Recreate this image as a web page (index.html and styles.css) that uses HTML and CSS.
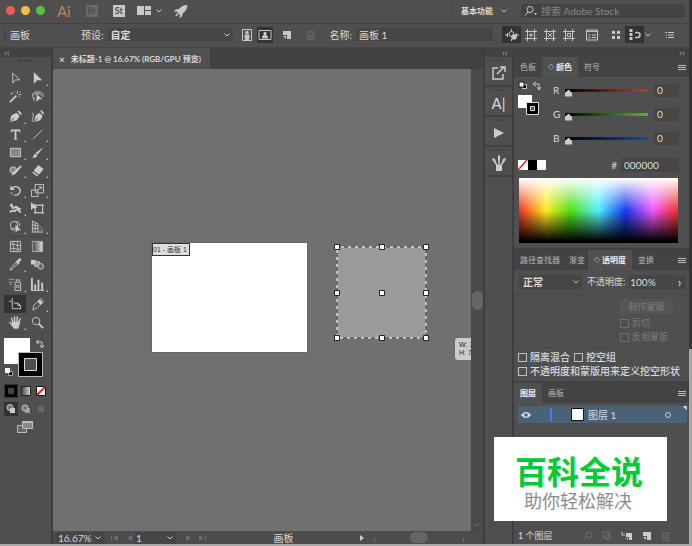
FILE: index.html
```
<!DOCTYPE html>
<html lang="zh-CN">
<head>
<meta charset="UTF-8">
<meta name="viewport" content="width=device-width, initial-scale=1.0">
<title>未标题-1</title>
<link rel="stylesheet" href="styles.css">
</head>
<body>
  <div class="app">
    <header class="title-bar">
      <div class="lights"><i class="red"></i><i class="yellow"></i><i class="green"></i></div>
      <span class="logo">Ai</span>
      <button class="badge dim">Br</button>
      <button class="badge">St</button>
      <button class="arrange" aria-label="排列文档">
        <svg width="14" height="12" viewBox="0 0 14 12" fill="#c8c8c8"><path d="M0 1h7v9H0zM8 1h6v4H8zM8 6h6v4H8z"/></svg>
        <svg width="6" height="6" viewBox="0 0 6 6" class="line"><path d="M0.500 1.500L3 4l2.500-2.500"/></svg>
      </button>
      <button aria-label="GPU 性能">
        <svg width="14" height="14" viewBox="0 0 14 14" fill="#c8c8c8"><path d="M13.500 1C9 1 6.500 3 5 5L1.500 5.500 0 8l3-.500L4 9.500l2 1L5.500 14 8 12.500 9 9c2.500-1.500 4-4 4.500-8zM3 9L1 12.500 4.500 11z"/></svg>
      </button>
      <button class="workspace">基本功能
        <svg width="6" height="6" viewBox="0 0 6 6" class="line"><path d="M0.500 1.500L3 4l2.500-2.500"/></svg>
      </button>
      <label class="search">
        <svg width="14" height="12" viewBox="0 0 14 12" class="line"><circle cx="6" cy="4.500" r="3"/><path d="M4 7L1 10.500"/><path d="M10 8h3l-1.500 2z" fill="#c8c8c8" stroke="none"/></svg>
        <input type="text" placeholder="搜索 Adobe Stock" aria-label="搜索 Adobe Stock">
      </label>
    </header>

    <div class="control-bar">
      <span class="mode">画板</span>
      <label for="preset">预设:</label>
      <select id="preset" class="preset"><option>自定</option></select>
      <div class="orient">
        <button aria-label="纵向"><svg width="12" height="14" viewBox="0 0 12 14"><path d="M1.500 1.500h9v11h-9z" fill="none" stroke="#c8c8c8"/><circle cx="6" cy="4.500" r="1.800" fill="#c8c8c8"/><path d="M3.500 6.500h5V10H8v2H4v-2h-.5z" fill="#c8c8c8"/></svg></button>
        <button class="on" aria-label="横向"><svg width="14" height="12" viewBox="0 0 14 12"><path d="M1 1.500h12v9H1z" fill="none" stroke="#c8c8c8"/><circle cx="7" cy="4.500" r="1.700" fill="#c8c8c8"/><path d="M4 9.500V7.500L5.500 6h3L10 7.500v2z" fill="#c8c8c8"/></svg></button>
      </div>
      <button aria-label="新建画板"><svg width="10" height="10" viewBox="0 0 10 10" fill="#c8c8c8"><path d="M1 1h8v8H5V5H1z"/><path d="M1 6l3 3V6z"/></svg></button>
      <button class="trash" aria-label="删除画板"><svg width="10" height="10" viewBox="0 0 10 10" fill="none" stroke="#6d6d6d"><path d="M1 2h8M3.500 1h3M2 3v6.500h6V3M4 4v4M6 4v4"/></svg></button>
      <label for="boardName">名称:</label>
      <input type="text" id="boardName" class="board-name" value="画板 1">
      <div class="bar-icons">
        <button class="on" aria-label="随画板移动"><svg width="14" height="14" viewBox="0 0 14 14" class="line"><circle cx="6.500" cy="6" r="2.500"/><path d="M6.500 1v2M0 7h2M2.500 5v4M6.500 11v2M11.500 5v4M12 7h2"/><path d="M7 7h4v4H7z" fill="#c8c8c8"/></svg></button>
        <button aria-label="显示中心标记"><svg width="12" height="12" viewBox="0 0 12 12" class="line"><path d="M2.500 0v12M9.500 0v12M0 2.500h12M0 9.500h12M6 4v4M4 6h4"/></svg></button>
        <button aria-label="显示十字线"><svg width="12" height="12" viewBox="0 0 12 12" class="line"><path d="M2.500 0v12M9.500 0v12M0 2.500h12M0 9.500h12M4 4l4 4M8 4L4 8"/></svg></button>
        <button aria-label="显示安全区域"><svg width="12" height="12" viewBox="0 0 12 12" class="line"><path d="M2.500 0v12M9.500 0v12M0 2.500h12M0 9.500h12M4.500 4.500h3v3h-3z"/></svg></button>
        <button class="options" aria-label="画板选项"><svg width="14" height="12" viewBox="0 0 14 12" class="line"><path d="M1.500 1h11v10h-11zM1.500 2.500h11M3.500 6h2M7 6h4M3.500 8.500h2M7 8.500h4"/></svg></button>
        <button class="grid-btn" aria-label="重新排列"><svg width="10" height="10" viewBox="0 0 10 10" fill="#c8c8c8"><path d="M1 1h3v3H1zM6 1h3v3H6zM1 6h3v3H1zM6 6h3v3H6z"/></svg></button>
        <button class="on" aria-label="对齐"><svg width="14" height="12" viewBox="0 0 14 12" class="line"><path d="M3 0v11" stroke-width="3" stroke-dasharray="3 1"/><path d="M7 3.500h2.500a2.300 2.300 0 0 1 0 5H7" stroke-width="1.600"/></svg></button>
        <button class="narrow" aria-label="对齐菜单"><svg width="6" height="6" viewBox="0 0 6 6" class="line"><path d="M0.500 1.500L3 4l2.500-2.500"/></svg></button>
        <button class="last" aria-label="控制菜单"><svg width="10" height="8" viewBox="0 0 10 8" class="line"><path d="M0 1.500h2M3 1.500h6M1 4h1M3 4h6M1 6.500h1M3 6.500h6"/></svg></button>
      </div>
    </div>

    <main class="main">
      <aside class="tools">
        <div class="strip">‹‹</div>
        <div class="grip"></div>
        <div class="tool-group">
          <button aria-label="选择"><svg viewBox="0 0 14 14" class="line"><path d="M4 1v11l3-3.500h4.500z"/></svg></button>
          <button class="more" aria-label="直接选择"><svg viewBox="0 0 14 14" fill="#ccc"><path d="M3 0v13l3.500-4H12z"/></svg></button>
          <button aria-label="魔棒"><svg viewBox="0 0 14 14" class="line"><path d="M1 13l7-7" stroke-width="2"/><path d="M9 1v3M13 5h-3M12.500 1.500L11 3M5 2l1 1M12 8l-1-1M2 4h2M3 3v2"/></svg></button>
          <button aria-label="套索"><svg viewBox="0 0 14 14" class="line"><path d="M4 9C0 9 0 2 7 2s7 4 5 6M3 6c0-3 8-3 8 0M4 8c-2 1 0 3-1 4"/><path d="M6 4v9l2.500-3H12z" fill="#ccc" stroke="none"/></svg></button>
        </div>
        <div class="tool-group">
          <button class="more" aria-label="钢笔"><svg viewBox="0 0 14 14" fill="#ccc"><path d="M1 13L2.500 6 8 3l3.500 3.500L8.500 11z"/><path d="M9 1.500l1.500-1L14 4l-1.500 1.500z"/><path d="M1.500 12.500l4-4" stroke="#4f4f4f"/></svg></button>
          <button aria-label="曲率"><svg viewBox="0 0 14 14"><path d="M3 13L5 6l4-3 3.500 3.500L10 11zM10 1l1-1 3 3-1 2z" fill="#ccc"/><path d="M3.500 12.500L7 9" stroke="#4f4f4f"/><path d="M1 3c2 1 2 3 1 5s-1 4 0 5" class="line"/></svg></button>
          <button class="more" aria-label="文字"><svg viewBox="0 0 14 14" fill="none" stroke="#ccc" stroke-width="2"><path d="M2 2.500h10M7 2v10"/><path d="M2.500 2v3M11.500 2v3M5 12h4" stroke-width="1"/></svg></button>
          <button class="more" aria-label="直线段"><svg viewBox="0 0 14 14" class="line"><path d="M2 12L12 2"/></svg></button>
          <button class="more" aria-label="矩形"><svg viewBox="0 0 14 14"><path d="M1.500 2.500h11v9h-11z" fill="#888" stroke="#ccc"/></svg></button>
          <button class="more" aria-label="画笔"><svg viewBox="0 0 14 14" fill="#ccc"><path d="M13.500 1L7 9.500 5 7.500zM4.500 8l2.300 2.300C6 13 3 13 1 12.500c2-.5 1.500-3.500 3.500-4.500z"/></svg></button>
          <button class="more" aria-label="斑点画笔"><svg viewBox="0 0 14 14"><circle cx="4.500" cy="6.500" r="3.500" fill="#888" stroke="#ccc"/><path d="M14 2.500L6.500 11l-4 1.500L4 9.500 12 2z" fill="#ccc"/></svg></button>
          <button class="more" aria-label="橡皮擦"><svg viewBox="0 0 14 14" fill="#ccc"><path d="M8 1l5.500 4.500-5 6L3 7z"/><path d="M2.500 8L7.500 12l-1 1.500-5-4z"/></svg></button>
        </div>
        <div class="tool-group">
          <button class="more" aria-label="旋转"><svg viewBox="0 0 14 14" fill="none" stroke="#ccc" stroke-width="1.500"><path d="M3 5c3-4 9-2 9 2.500 0 3-3 5-6 4.500"/><path d="M1.500 1.500v5h5z" fill="#ccc" stroke="none"/><path d="M2 9l3 3" stroke-dasharray="1 1"/></svg></button>
          <button class="more" aria-label="比例缩放"><svg viewBox="0 0 14 14" class="line"><path d="M.5 6.500h7v7h-7zM4.500.5h9v9h-9zM6 8l5-5M8 3h3v3"/></svg></button>
          <button class="more" aria-label="宽度"><svg viewBox="0 0 14 14" fill="none" stroke="#ccc" stroke-width="2"><path d="M1 4c4-3 1 5 5 2s2 3 7 1M1 11c3-4 4 1 6-2s4 2 6 2M3 2v3"/></svg></button>
          <button aria-label="自由变换"><svg viewBox="0 0 14 14" class="line"><path d="M4.500 3.500h8v8h-8zM3 3.500h11M3 11.500h11M4.500 2v11M12.500 2v11"/><path d="M0 0v9l2.500-2.500H7z" fill="#ccc" stroke="none"/></svg></button>
          <button class="more" aria-label="形状生成器"><svg viewBox="0 0 14 14" class="line"><circle cx="5.500" cy="5.500" r="4"/><path d="M7 2c3-1 6 2 4 5M2 9c0 2 2 2 4 2"/><path d="M7 5v9l2.500-3H13z" fill="#ccc" stroke="none"/></svg></button>
          <button class="more" aria-label="透视网格"><svg viewBox="0 0 14 14" class="line"><path d="M1.500 1v12M1.500 1l6 3v9M4.500 2.500V13M1.500 5l6 1.500M1 9h7M1 13h12"/><path d="M9 6l4 5H9" stroke-dasharray="1 1"/></svg></button>
        </div>
        <div class="tool-group">
          <button aria-label="网格"><svg viewBox="0 0 14 14" class="line"><path d="M1.500 1.500h11v11h-11zM5 1c-3 4 2 7 0 12M10 1c-3 5 1 6-1 12M1 5c4-3 7 3 12 0M1 10c5-3 8 2 12-1"/></svg></button>
          <button aria-label="渐变"><svg viewBox="0 0 14 14"><defs><linearGradient id="fade"><stop offset="0" stop-color="#444"/><stop offset="1" stop-color="#ddd"/></linearGradient></defs><path d="M1.500 1.500h11v11h-11z" fill="url(#fade)" stroke="#aaa"/></svg></button>
          <button class="more" aria-label="吸管"><svg viewBox="0 0 14 14"><path d="M1.500 13l1-3 5-5 1.500 1.500-5 5z" fill="none" stroke="#ccc"/><path d="M7 3.500L10.500 7l1-1-1-1L13 2.500c1-1-1-3-2-2L8.500 3z" fill="#ccc"/></svg></button>
          <button aria-label="混合"><svg viewBox="0 0 14 14"><path d="M0 2h5v5H0z" fill="#ccc"/><path d="M4 4h5v5H4z" fill="#999" stroke="#ccc"/><circle cx="10.500" cy="9" r="3" fill="#666" stroke="#ccc"/></svg></button>
        </div>
        <div class="tool-group">
          <button class="more" aria-label="符号喷枪"><svg viewBox="0 0 14 14" class="line"><path d="M6.500 4.500h6v9h-6zM8 4V2h3v2"/><circle cx="9.500" cy="9" r="1.500"/><path d="M0 1.500h6M0 4.500h4M1 7h2" stroke-dasharray="1.500 1"/></svg></button>
          <button class="more" aria-label="柱形图"><svg viewBox="0 0 14 14" fill="none" stroke="#ccc" stroke-width="2"><path d="M1 0v13M4.500 7v6M8 2v11M12 5v8"/><path d="M0 13.500h14" stroke-width="1"/></svg></button>
        </div>
        <div class="tool-group">
          <button class="on" aria-label="画板"><svg viewBox="0 0 14 14" class="line"><path d="M3.500 0v11.500H13M0 3.500h3"/><path d="M5 5.500h4.500l3 2.500v3.500"/><path d="M9.500 5.500V8h3"/></svg></button>
          <button class="more" aria-label="切片"><svg viewBox="0 0 14 14" class="line"><path d="M2 13L3 8l6-6 3 3-5.500 5.500zM9 2l1.500-1.500 3 3L12 5"/><path d="M9.500 2l3 3-2 2-3-3z" fill="#ccc"/></svg></button>
          <button class="more" aria-label="抓手"><svg viewBox="0 0 14 14" fill="none" stroke="#ccc" stroke-width="1.600" stroke-linecap="round"><path d="M4 7L3 2.500M6 6V1M8.500 6l.5-5M10.500 7L12 3M4 10L1 7"/><path d="M4 7h7l-1 4.500L9 13H6l-2.500-3z" fill="#ccc"/></svg></button>
          <button aria-label="缩放"><svg viewBox="0 0 14 14" fill="none" stroke="#ccc"><circle cx="5.500" cy="5.500" r="4"/><path d="M8.500 8.500l4.500 4.500" stroke-width="2"/></svg></button>
        </div>
        <svg class="paint" width="44" height="40" viewBox="0 0 44 40">
          <path d="M0 0h26v26H0z" fill="#fff"/>
          <path d="M14.500 14.500h24v24h-24z" fill="#000" stroke="#bbb"/>
          <path d="M20.500 20.500h12v12h-12z" fill="#4f4f4f" stroke="#ddd"/>
          <path d="M33 4h5v5M35 2l-3 2 3 2M36 7l2 3 2-3" class="line"/>
          <path d="M4.500 33.500h4v4h-4z" fill="#000" stroke="#aaa"/><path d="M1 30h5v5H1z" fill="#fff"/>
        </svg>
        <div class="paint-modes">
          <button class="on" aria-label="颜色"><svg width="12" height="12" viewBox="0 0 12 12"><path d="M1.500 1.500h9v9h-9z" stroke="#000" stroke-width="3" fill="#444"/></svg></button>
          <button aria-label="渐变填色"><svg width="12" height="12" viewBox="0 0 12 12"><path d="M1.500 1.500h9v9h-9z" fill="url(#fade)" stroke="#222"/></svg></button>
          <button aria-label="无"><svg width="12" height="12" viewBox="0 0 12 12"><path d="M1.500 1.500h9v9h-9z" fill="#fff" stroke="#111"/><path d="M2 10l8-8" stroke="#d22" stroke-width="2"/></svg></button>
        </div>
        <div class="paint-modes">
          <button class="on" aria-label="正常绘图"><svg width="12" height="12" viewBox="0 0 12 12"><circle cx="5" cy="4.500" r="3" fill="#777" stroke="#ccc"/><path d="M5 5h5v5H5z" fill="#ccc"/></svg></button>
          <button aria-label="背面绘图"><svg width="12" height="12" viewBox="0 0 12 12"><path d="M5 5h5v5H5z" fill="#999"/><circle cx="5" cy="5" r="3" fill="#777" stroke="#ccc"/></svg></button>
          <button aria-label="内部绘图"><svg width="12" height="12" viewBox="0 0 12 12"><circle cx="6" cy="6" r="3" fill="#666" stroke="#6d6d6d"/></svg></button>
        </div>
        <button class="screen-mode" aria-label="屏幕模式"><svg width="18" height="14" viewBox="0 0 18 14"><path d="M1.500 5.500h9v7h-9z" fill="#666" stroke="#bbb"/><path d="M6.500 1.500h10v7h-10z" fill="#888" stroke="#bbb"/><path d="M6 1h11v2H6z" fill="#bbb"/></svg></button>
      </aside>

      <section class="document">
        <div class="tabs">
          <div class="doc-tab"><button aria-label="关闭">×</button>未标题-1 @ 16.67% (RGB/GPU 预览)</div>
        </div>
        <div class="work">
          <div class="canvas">
            <div class="board"><span>01 - 画板 1</span></div>
            <svg class="new-board" width="96" height="98" viewBox="0 0 96 98">
              <path d="M4 4h89v91H4z" fill="#9a9a9a" stroke="#fff"/>
              <path d="M4 4h89v91H4z" fill="none" stroke="#111" stroke-dasharray="4 3"/>
              <g fill="#fff" stroke="#222"><path d="M1.500 1.500h5v5h-5zM46.500 1.500h5v5h-5zM90.500 1.500h5v5h-5zM1.500 47.500h5v5h-5zM46.500 47.500h5v5h-5zM90.500 47.500h5v5h-5zM1.500 92.500h5v5h-5zM46.500 92.500h5v5h-5zM90.500 92.500h5v5h-5z"/></g>
            </svg>
            <div class="measure">W: 7<br>H: 7</div>
          </div>
          <div class="scroll-y">
            <i></i>
            <svg width="6" height="6" viewBox="0 0 6 6" fill="none" stroke="#777"><path d="M0.500 1.500L3 4l2.500-2.500"/></svg>
          </div>
        </div>
        <footer class="status">
          <select class="zoom-level" aria-label="缩放比例"><option>16.67%</option></select>
          <svg width="24" height="8" viewBox="0 0 24 8" fill="#6c6c6c"><path d="M1 1h1v6H1zM8 1v6L3 4zM22 1v6l-5-3z"/></svg>
          <select class="board-no" aria-label="画板编号"><option>1</option></select>
          <svg width="24" height="8" viewBox="0 0 24 8" fill="#6c6c6c"><path d="M2 1v6l5-3zM15 1v6l5-3zM21 1h1v6h-1z"/></svg>
          <span class="status-text">画板</span>
          <svg width="6" height="8" viewBox="0 0 6 8" fill="#ccc"><path d="M1 1v6l4-3z"/></svg>
          <div class="scroll-x"><span>‹</span><i></i><span>›</span></div>
        </footer>
      </section>

      <div class="side">
        <div class="strip side-strip"><span>‹‹</span><span>››</span></div>
        <div class="side-row">
          <nav class="dock">
            <button aria-label="资源导出"><svg width="16" height="16" viewBox="0 0 16 16" fill="none" stroke="#ccc" stroke-width="1.500"><path d="M7 3H2v11h10V9M6 9l7-7M9 2h5v5"/></svg></button>
            <button class="char">A|</button>
            <button aria-label="动作"><svg width="16" height="16" viewBox="0 0 16 16" fill="#ccc"><path d="M3 3v10l10-5z"/></svg></button>
            <button aria-label="画笔面板"><svg width="16" height="16" viewBox="0 0 16 16" fill="#ccc"><path d="M5 10h6v6H5z"/><path d="M6 10L3 6M8 10V4M10 10l3-4" stroke="#ccc" stroke-width="1.500"/><path d="M1 3l3 1 1 3-3-1zM7 5V1l1-1 1 1v4zM11 7l1-3 3-1-1 3z"/></svg></button>
          </nav>

          <div class="panels">
            <section class="panel">
              <div class="panel-tabs"><button>色板</button><button class="active"><small>◇</small>颜色</button><button>符号</button><button class="menu" aria-label="面板菜单"></button></div>
              <div class="color-body">
                <div class="color-top">
                  <svg class="mini-paint" width="24" height="38" viewBox="0 0 24 38">
                    <path d="M4.500 4.500h4v4h-4z" fill="#000" stroke="#ccc"/><path d="M1 2h5v5H1z" fill="#fff" stroke="#111"/>
                    <path d="M17 4h4v5M18 2l-3 2 3 2M19 7l2 3 2-3" class="line"/>
                    <path d="M0 15h14v13H0z" fill="#fff"/><path d="M8.500 22.500h12v12h-12z" fill="#000" stroke="#ddd"/><path d="M12.500 26.500h4v4h-4z" fill="#4f4f4f" stroke="#ddd"/>
                  </svg>
                  <div class="channels">
                    <div class="channel"><label for="r">R</label><input type="range" id="r" class="r" max="255" value="0"><input type="text" value="0" aria-label="R 值"></div>
                    <div class="channel"><label for="g">G</label><input type="range" id="g" class="g" max="255" value="0"><input type="text" value="0" aria-label="G 值"></div>
                    <div class="channel"><label for="b">B</label><input type="range" id="b" class="b" max="255" value="0"><input type="text" value="0" aria-label="B 值"></div>
                  </div>
                </div>
                <div class="hex-row">
                  <svg width="28" height="10" viewBox="0 0 28 10"><path d="M0 0h28v10H0z" fill="#fff"/><path d="M10 0h9v10h-9z" fill="#000"/><path d="M0 10L9 0" stroke="#d22" stroke-width="1.500"/></svg>
                  <label for="hex">#</label><input type="text" id="hex" value="000000">
                </div>
                <div class="spectrum"></div>
              </div>
            </section>

            <section class="panel">
              <div class="panel-tabs"><button>路径查找器</button><button class="tight">渐变</button><button class="active"><small>◇</small>透明度</button><button>变换</button><button class="menu" aria-label="面板菜单"></button></div>
              <div class="opacity-body">
                <div class="opacity-row">
                  <select aria-label="混合模式"><option>正常</option></select>
                  <label for="opacity">不透明度:</label><input type="text" id="opacity" value="100%"><button aria-label="不透明度滑块">›</button>
                </div>
                <div class="mask">
                  <button disabled>制作蒙版</button>
                  <label><input type="checkbox" disabled>剪切</label>
                  <label><input type="checkbox" disabled>反相蒙版</label>
                </div>
                <div class="checks">
                  <label><input type="checkbox">隔离混合</label>
                  <label><input type="checkbox">挖空组</label>
                  <label><input type="checkbox">不透明度和蒙版用来定义挖空形状</label>
                </div>
              </div>
            </section>

            <section class="panel layers">
              <div class="panel-tabs"><button class="active">图层</button><button>画板</button><button class="menu" aria-label="面板菜单"></button></div>
              <div class="layer">
                <svg width="10" height="8" viewBox="0 0 10 8"><path d="M0 4c3-4 7-4 10 0-3 4-7 4-10 0z" fill="#ddd"/><circle cx="5" cy="4" r="1.800" fill="#4a6278"/></svg>
                <i class="layer-color"></i><i class="thumb"></i>
                <span>图层 1</span>
                <i class="target"></i>
              </div>
              <div class="layer-foot">
                <span>1 个图层</span>
                <svg width="10" height="10" viewBox="0 0 10 10" fill="none" stroke="#6c6c6c"><circle cx="6" cy="4" r="3"/><path d="M4 6L1 9"/></svg>
                <svg width="10" height="10" viewBox="0 0 10 10" fill="none" stroke="#6c6c6c"><path d="M1 1h6v6H1z"/><circle cx="6" cy="6" r="2.500"/></svg>
                <svg width="12" height="10" viewBox="0 0 12 10" fill="#ccc"><path d="M5 2h6v7H8V6H5zM5 7l2 2V7z"/><path d="M1 1v3h3" fill="none" stroke="#ccc"/></svg>
                <svg width="10" height="10" viewBox="0 0 10 10" fill="#ccc"><path d="M1 1h8v8H5V5H1z"/><path d="M1 6l3 3V6z"/></svg>
                <svg width="10" height="10" viewBox="0 0 10 10" fill="none" stroke="#6c6c6c"><path d="M1 2h8M2 3v6.500h6V3M4 4v4M6 4v4"/></svg>
              </div>
            </section>
          </div>
        </div>
      </div>
    </main>
  </div>

  <div class="watermark">
    <strong>百科全说</strong>
    <span>助你轻松解决</span>
  </div>
</body>
</html>
```
FILE: styles.css
```
* {
  box-sizing: border-box;
}

body {
  margin: 0;
  height: 100vh;
  padding: 0 3px 2px 0;
  background: linear-gradient(#353535 64%, #a8a8a8 64%);
  font-family: Lato, "Noto Sans CJK SC", sans-serif;
  font-size: 10px;
  line-height: 12px;
  color: #dadada;
  overflow: hidden;
}

button,
input,
select {
  font: inherit;
  color: inherit;
  margin: 0;
  padding: 0;
  border: 0;
  border-radius: 0;
  background: none;
  outline: none;
}

button {
  display: flex;
  align-items: center;
  justify-content: center;
}

svg {
  display: block;
  flex: none;
}

input[type="text"] {
  min-width: 0;
  background-color: #464646;
}

select {
  appearance: none;
  background: #464646 url("data:image/svg+xml,%3Csvg xmlns='http://www.w3.org/2000/svg' width='6' height='6'%3E%3Cpath d='M.5 1.500L3 4l2.500-2.500' fill='none' stroke='%23ccc'/%3E%3C/svg%3E") no-repeat right 3px center;
}

.line {
  fill: none;
  stroke: #c8c8c8;
}

.on {
  background-color: #333;
}

.app {
  height: 100%;
  display: flex;
  flex-direction: column;
  background-color: #4f4f4f;
}

/* title bar */
.title-bar {
  height: 24px;
  display: flex;
  align-items: center;
  padding: 0 4px 2px 6px;
  border-bottom: 1px solid #414141;
}

.lights {
  display: flex;
  gap: 6px;
}

.lights i {
  width: 9px;
  height: 9px;
  border-radius: 50%;
}

.red {
  background-color: #ee5c54;
}

.yellow {
  background-color: #f2be3c;
}

.green {
  background-color: #56c340;
}

.logo {
  margin: 0 15px 0 12px;
  font-size: 15px;
  color: #c08060;
}

.badge {
  width: 12px;
  height: 12px;
  margin-right: 15px;
  background-color: #c8c8c8;
  color: #4f4f4f;
  font-size: 9px;
  font-weight: bold;
}

.badge.dim {
  background-color: #6a6a6a;
}

.arrange {
  gap: 5px;
  margin-right: 12px;
}

.arrange + button {
  margin-right: auto;
}

.badge + .arrange {
  margin-left: -3px;
}

.workspace {
  gap: 8px;
  height: 20px;
  padding: 0 14px 0 9px;
  border-left: 1px solid #464646;
  font-size: 8px;
  font-weight: bold;
}

.search {
  display: flex;
  align-items: center;
  width: 164px;
  height: 14px;
  padding: 0 3px;
  background-color: #444;
  border-radius: 2px;
}

.search input {
  flex: 1;
  margin-left: 3px;
  background: none;
  font-size: 10px;
}

.search input::placeholder {
  color: #868686;
}

/* control bar */
.control-bar {
  height: 24px;
  display: flex;
  align-items: center;
  padding: 0 10px 2px 4px;
  border-bottom: 1px solid #454545;
}

.mode {
  padding-left: 5px;
  margin-right: 51px;
  border-left: 1px solid #3e3e3e;
}

.preset {
  width: 125px;
  height: 13px;
  margin: 0 6px 0 4px;
  padding-left: 3px;
  font-weight: bold;
}

.orient {
  display: flex;
  gap: 2px;
  margin-right: 9px;
}

.orient button {
  width: 16px;
  height: 16px;
}

.trash {
  margin: 0 14px;
}

.board-name {
  flex: 1;
  height: 13px;
  margin: 0 9px 0 4px;
  padding: 0 3px;
}

.bar-icons {
  display: flex;
  align-items: center;
}

.bar-icons button {
  width: 19px;
  height: 17px;
}

.bar-icons .options {
  margin: 0 5px 0 4px;
}

.bar-icons .narrow {
  width: 8px;
}

.bar-icons .last {
  margin-left: 8px;
}

/* main */
.main {
  flex: 1;
  min-height: 0;
  display: flex;
}

.strip {
  height: 9px;
  padding-left: 4px;
  background-color: #424242;
  line-height: 8px;
  color: #aaa;
}

.tools {
  width: 53px;
  flex: none;
  border-right: 2px solid #3d3d3d;
}

.grip {
  width: 14px;
  height: 3px;
  margin: 2px auto 7px 18px;
  background: repeating-linear-gradient(90deg, #3b3b3b 0 1px, #4f4f4f 1px 2px);
}

.tool-group {
  display: grid;
  grid-template-columns: 22px 22px;
  padding: 0 0 1px 4px;
  border-bottom: 1px solid #494949;
}

.tool-group button {
  position: relative;
  height: 18px;
}

.tool-group svg {
  width: 13px;
  height: 13px;
}

.tool-group .more::after {
  content: "";
  position: absolute;
  right: 0;
  bottom: 1px;
  border: 1px solid #bbb;
  border-top-color: transparent;
  border-left-color: transparent;
}

.paint {
  margin: 5px 0 6px 4px;
}

.paint-modes {
  display: flex;
  padding-left: 4px;
  gap: 1px;
  margin-bottom: 4px;
}

.paint-modes button {
  width: 14px;
  height: 14px;
}

.screen-mode {
  margin: 4px 0 0 16px;
}

/* document */
.document {
  flex: 1;
  min-width: 0;
  display: flex;
  flex-direction: column;
}

.tabs {
  height: 21px;
  display: flex;
  background-color: #414141;
}

.doc-tab {
  display: flex;
  align-items: center;
  gap: 6px;
  padding: 0 9px 0 6px;
  background-color: #505050;
  font-size: 8px;
  font-weight: bold;
}

.doc-tab button {
  font-size: 10px;
}

.work {
  flex: 1;
  display: flex;
}

.canvas {
  flex: 1;
  position: relative;
  overflow: hidden;
  background-color: #707070;
}

.board {
  position: absolute;
  left: 99px;
  top: 174px;
  width: 155px;
  height: 109px;
  background-color: #fff;
  outline: 1px solid #666;
}

.board span {
  display: block;
  width: 38px;
  height: 13px;
  border: 1px solid #333;
  background-color: #ddd;
  color: #333;
  font: 7px/11px "Liberation Sans", "Noto Sans CJK SC", sans-serif;
  white-space: nowrap;
}

.new-board {
  position: absolute;
  left: 280px;
  top: 174px;
}

.measure {
  position: absolute;
  left: 402px;
  top: 269px;
  padding: 3px 4px;
  border-radius: 3px;
  background-color: #ccc;
  color: #222;
  font: 7px/8px "Liberation Sans", sans-serif;
  white-space: nowrap;
}

.scroll-y {
  width: 12px;
  display: grid;
  grid-template-rows: 1fr auto 1fr;
  justify-items: center;
  background-color: #4a4a4a;
}

.scroll-y i {
  grid-row: 2;
  width: 11px;
  height: 19px;
  border-radius: 6px;
  background-color: #656565;
}

.scroll-y svg {
  grid-row: 3;
  align-self: end;
  margin-bottom: 3px;
}

.status {
  height: 13px;
  display: flex;
  align-items: center;
  padding: 0 14px 0 3px;
  background-color: #4c4c4c;
}

.status select {
  height: 12px;
  padding-left: 2px;
}

.zoom-level {
  width: 48px;
  margin-right: 6px;
}

.board-no {
  width: 42px;
  margin-right: 8px;
}

.status-text {
  flex: 1;
  text-align: center;
}

.scroll-x {
  width: 104px;
  display: flex;
  align-items: center;
  justify-content: space-between;
  padding: 0 4px 0 8px;
  color: #888;
}

.scroll-x i {
  width: 18px;
  height: 11px;
  border-radius: 6px;
  background-color: #656565;
}

/* right side */
.side {
  width: 206px;
  flex: none;
  display: flex;
  flex-direction: column;
  border-left: 2px solid #3d3d3d;
}

.side-strip {
  display: flex;
  justify-content: space-between;
  padding: 0 4px 0 17px;
}

.side-row {
  flex: 1;
  min-height: 0;
  display: flex;
}

.dock {
  width: 29px;
  flex: none;
  border-right: 2px solid #3e3e3e;
}

.dock button {
  width: 100%;
  height: 30px;
  padding-top: 3px;
  border-bottom: 2px solid #414141;
  background: repeating-linear-gradient(90deg, #3e3e3e 0 1px, #4f4f4f 1px 2px) no-repeat center 2px / 14px 2px;
}

.dock .char {
  font-size: 15px;
}

.panels {
  flex: 1;
  min-width: 0;
  display: flex;
  flex-direction: column;
}

.panel-tabs {
  height: 20px;
  display: flex;
  background-color: #434343;
}

.panel-tabs button {
  padding: 0 6px;
  font-size: 8px;
  color: #b8b8b8;
}

.panel-tabs .active {
  background-color: #505050;
  color: #eee;
  font-weight: bold;
}

.panel-tabs .tight {
  padding: 0 3px;
}

.panel-tabs small {
  margin-right: 2px;
  font-size: 6px;
}

.panel-tabs .menu {
  width: 8px;
  height: 5px;
  margin: 8px 3px 0 auto;
  padding: 0;
  background: repeating-linear-gradient(#bbb 0 1px, #434343 1px 2px);
}

.color-body {
  height: 173px;
  padding: 3px 4px 0;
  border-bottom: 2px solid #414141;
}

.color-top {
  display: flex;
  gap: 11px;
}

.channels {
  flex: 1;
  min-width: 0;
}

.channel {
  height: 24px;
  display: flex;
  align-items: center;
  padding-bottom: 4px;
}

.channel label {
  width: 12px;
}

.channel input[type="range"] {
  appearance: none;
  flex: 1;
  width: 60px;
  min-width: 0;
  height: 12px;
  margin-right: 6px;
}

.channel input::-webkit-slider-runnable-track {
  height: 3px;
}

.channel .r::-webkit-slider-runnable-track {
  background: linear-gradient(90deg, #000, #c8392b);
}

.channel .g::-webkit-slider-runnable-track {
  background: linear-gradient(90deg, #000, #5ab82c);
}

.channel .b::-webkit-slider-runnable-track {
  background: linear-gradient(90deg, #000, #1d3fc4);
}

.channel input::-webkit-slider-thumb {
  appearance: none;
  width: 7px;
  height: 7px;
  margin-top: 1px;
  background-color: #ccc;
  clip-path: polygon(50% 0, 100% 50%, 100% 100%, 0 100%, 0 50%);
}

.channel input[type="text"] {
  width: 25px;
  height: 13px;
  margin-right: 6px;
  padding-left: 3px;
}

.hex-row {
  display: flex;
  align-items: center;
  height: 14px;
  margin: 6px 6px 6px 0;
}

.hex-row label {
  margin: 0 4px 0 auto;
}

.hex-row input {
  width: 58px;
  height: 14px;
  padding-left: 3px;
}

.spectrum {
  height: 65px;
  margin: 0 7px 0 1px;
  background:
    linear-gradient(#fff, transparent 50%, #000 97%),
    linear-gradient(90deg, #f03020, #ffec20 17%, #50e010 32%, #50f0ff 50%, #1838f0 67%, #f058ff 84%, #f03020);
}

.opacity-body {
  height: 113px;
  border-bottom: 2px solid #414141;
}

.opacity-row {
  display: flex;
  align-items: center;
  height: 25px;
  padding: 0 3px 0 5px;
  border-bottom: 1px solid #494949;
}

.opacity-row select {
  width: 63px;
  height: 14px;
  margin-right: 5px;
  padding-left: 4px;
  font-weight: bold;
}

.opacity-row label {
  font-size: 9px;
  margin-right: 3px;
}

.opacity-row input {
  flex: 1;
  height: 14px;
  padding-left: 2px;
}

.opacity-row button {
  width: 13px;
  height: 14px;
  margin-left: 1px;
  background-color: #464646;
  font-size: 14px;
}

.mask {
  display: flex;
  flex-direction: column;
  align-items: flex-start;
  height: 53px;
  padding: 4px 0 0 106px;
  border-bottom: 1px solid #494949;
  font-size: 9px;
  color: #7c7c7c;
}

.mask button {
  width: 53px;
  height: 15px;
  margin-bottom: 2px;
  background-color: #555;
}

.mask label,
.checks label {
  display: flex;
  align-items: center;
  gap: 3px;
  height: 14px;
}

input[type="checkbox"] {
  appearance: none;
  width: 9px;
  height: 9px;
  border: 1px solid #c0c0c0;
}

input[type="checkbox"]:disabled {
  border-color: #6e6e6e;
}

.checks {
  display: flex;
  flex-wrap: wrap;
  gap: 0 4px;
  padding: 2px 0 0 4px;
  font-weight: 500;
  white-space: nowrap;
}

.layers {
  flex: 1;
  display: flex;
  flex-direction: column;
}

.layer {
  display: flex;
  align-items: center;
  height: 17px;
  margin: 3px 2px 0 4px;
  padding-left: 3px;
  background: linear-gradient(225deg, #ccc 3px, #4a6278 3px);
}

.layer-color {
  width: 2px;
  height: 13px;
  margin: 0 19px;
  background-color: #4a7ce8;
}

.thumb {
  width: 13px;
  height: 13px;
  margin-right: 4px;
  border: 1px solid #111;
  background-color: #fff;
}

.target {
  width: 6px;
  height: 6px;
  margin: 0 16px 0 auto;
  border: 1px solid #ccc;
  border-radius: 50%;
}

.layer-foot {
  display: flex;
  align-items: center;
  gap: 9px;
  height: 17px;
  margin-top: auto;
  padding: 0 18px 0 4px;
}

.layer-foot span {
  margin-right: auto;
  font-size: 9px;
}

/* badge in the corner, over the panels */
.watermark {
  position: fixed;
  right: 25px;
  bottom: 25px;
  display: flex;
  flex-direction: column;
  align-items: flex-start;
  padding: 15px 24px 10px 21px;
  background-color: #fff;
  color: #8c8c8c;
  font-family: "Noto Sans CJK SC", sans-serif;
  font-size: 18px;
  line-height: 22px;
}

.watermark strong {
  color: #0c3;
  font-size: 32px;
  line-height: 37px;
}

.watermark span {
  padding-left: 9px;
}
```
